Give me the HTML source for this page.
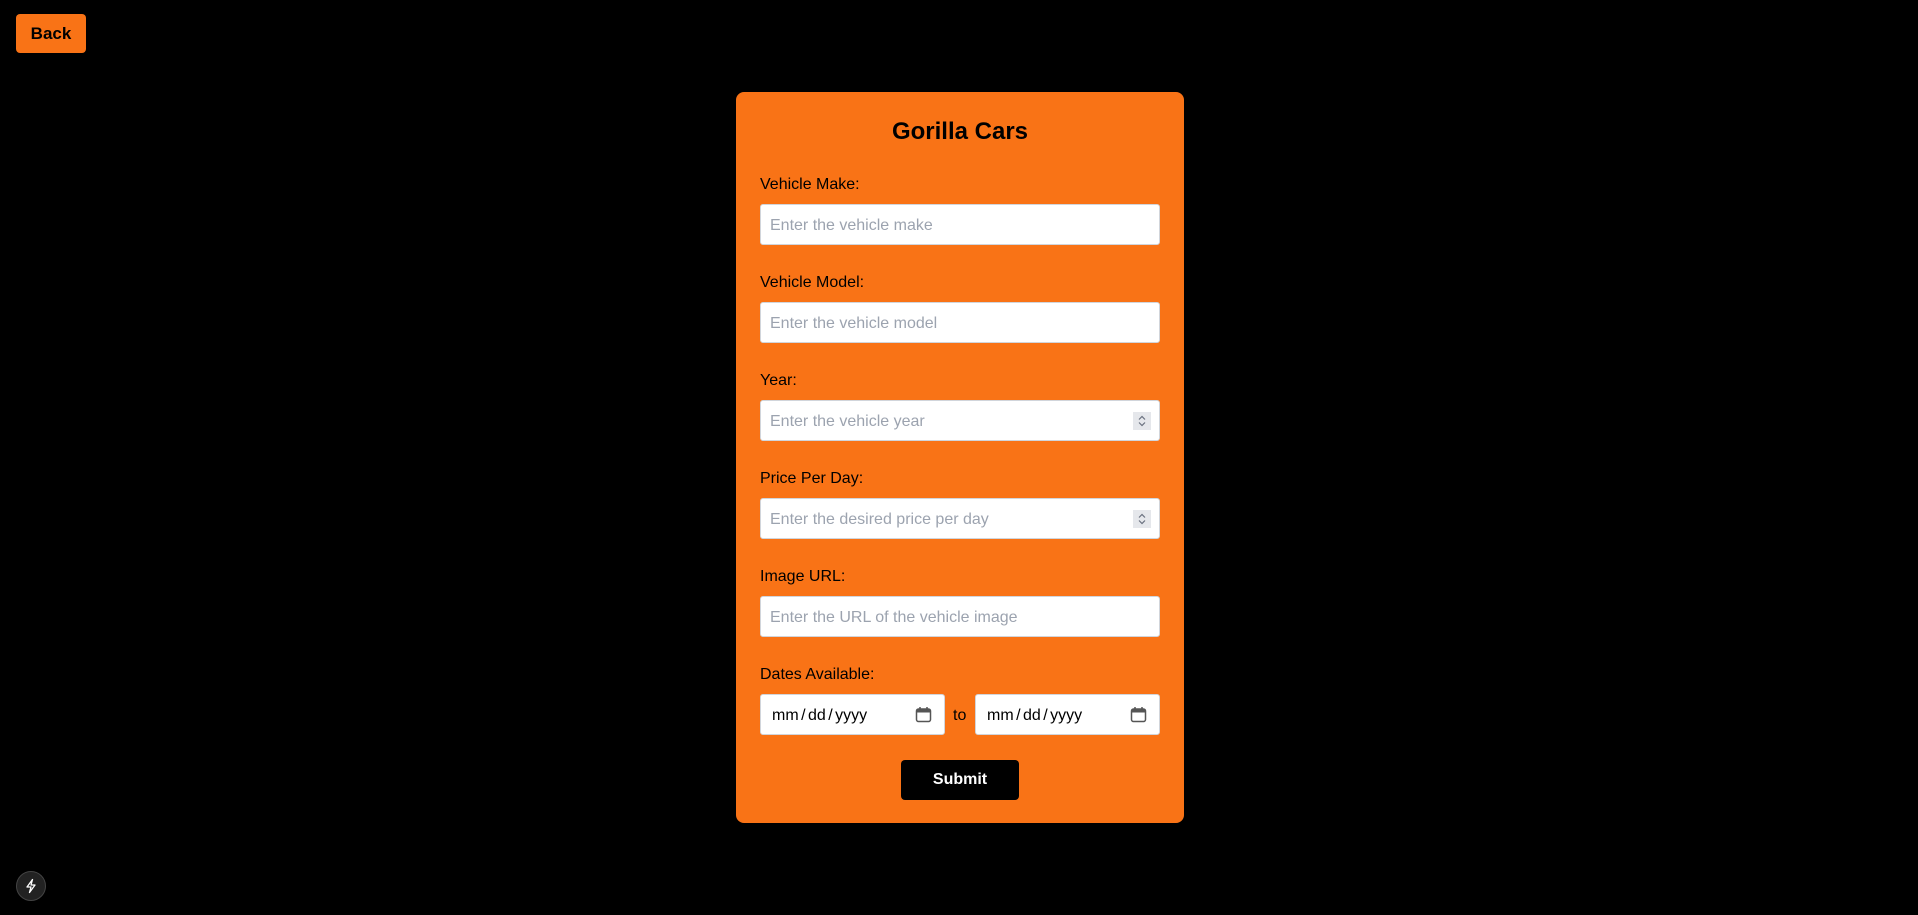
<!DOCTYPE html>
<html><head><style>
*{box-sizing:border-box;margin:0;padding:0}
html,body{width:1918px;height:915px;background:#000;overflow:hidden;font-family:"Liberation Sans",Arial,sans-serif}
.abs{position:absolute}
.back{left:16px;top:14px;width:70px;height:39px;background:#f97316;border-radius:4px;color:#000;font-weight:bold;font-size:17px;display:flex;align-items:center;justify-content:center}
.card{left:736px;top:92px;width:448px;height:731px;background:#f97316;border-radius:8px}
.title{left:736px;width:448px;top:118px;text-align:center;font-size:24px;font-weight:bold;color:#000}
.lbl{left:760px;font-size:16px;color:#000;line-height:18px}
.inp{left:760px;width:400px;height:41px;background:#fff;border:1px solid #d1d5db;border-radius:3px;color:#9ca3af;font-size:16px;padding-left:9px;padding-top:2px;display:flex;align-items:center}
.spin{width:18px;height:18px;background:#e5e7eb;position:absolute;right:8px;top:11px}
.date{top:694px;width:185px;height:41px;background:#fff;border:1px solid #d1d5db;border-radius:3px;font-size:16px;color:#000;padding-left:11px;padding-top:2px;display:flex;align-items:center;word-spacing:-2px}
.cal{position:absolute;right:12px;top:11px}
.sub{left:901px;top:760px;width:118px;height:40px;background:#000;border-radius:4px;color:#fff;font-weight:bold;font-size:16px;display:flex;align-items:center;justify-content:center}
.bolt{left:16px;top:871px;width:30px;height:30px;border-radius:50%;background:#222;border:1px solid #444;display:flex;align-items:center;justify-content:center}
</style></head><body>
<div class="abs back">Back</div>
<div class="abs card"></div>
<div class="abs title">Gorilla Cars</div>

<div class="abs lbl" style="top:176px">Vehicle Make:</div>
<div class="abs inp" style="top:204px">Enter the vehicle make</div>
<div class="abs lbl" style="top:274px">Vehicle Model:</div>
<div class="abs inp" style="top:302px">Enter the vehicle model</div>
<div class="abs lbl" style="top:372px">Year:</div>
<div class="abs inp" style="top:400px">Enter the vehicle year<div class="spin"><svg width="18" height="18" viewBox="0 0 18 18"><path d="M6 7.5l3-3 3 3M6 10.5l3 3 3-3" stroke="#6b7280" stroke-width="1.2" fill="none"/></svg></div></div>
<div class="abs lbl" style="top:470px">Price Per Day:</div>
<div class="abs inp" style="top:498px">Enter the desired price per day<div class="spin"><svg width="18" height="18" viewBox="0 0 18 18"><path d="M6 7.5l3-3 3 3M6 10.5l3 3 3-3" stroke="#6b7280" stroke-width="1.2" fill="none"/></svg></div></div>
<div class="abs lbl" style="top:568px">Image URL:</div>
<div class="abs inp" style="top:596px">Enter the URL of the vehicle image</div>
<div class="abs lbl" style="top:666px">Dates Available:</div>
<div class="abs date" style="left:760px">mm / dd / yyyy<svg class="cal" width="17" height="17" viewBox="0 0 17 17"><rect x="1.5" y="3" width="14" height="12.5" rx="2" fill="none" stroke="#555" stroke-width="1.5"/><rect x="1.5" y="3" width="14" height="3.5" fill="#555"/><path d="M5 1v3M12 1v3" stroke="#555" stroke-width="1.5"/></svg></div>
<div class="abs" style="left:953px;top:707px;font-size:16px;color:#000">to</div>
<div class="abs date" style="left:975px">mm / dd / yyyy<svg class="cal" width="17" height="17" viewBox="0 0 17 17"><rect x="1.5" y="3" width="14" height="12.5" rx="2" fill="none" stroke="#555" stroke-width="1.5"/><rect x="1.5" y="3" width="14" height="3.5" fill="#555"/><path d="M5 1v3M12 1v3" stroke="#555" stroke-width="1.5"/></svg></div>
<div class="abs sub">Submit</div>
<div class="abs bolt"><svg width="16" height="16" viewBox="0 0 16 16"><path d="M9.5 1.5L4 9h4l-1.5 5.5L12 7H8z" fill="none" stroke="#fff" stroke-width="1.3" stroke-linejoin="round"/></svg></div>
</body></html>
